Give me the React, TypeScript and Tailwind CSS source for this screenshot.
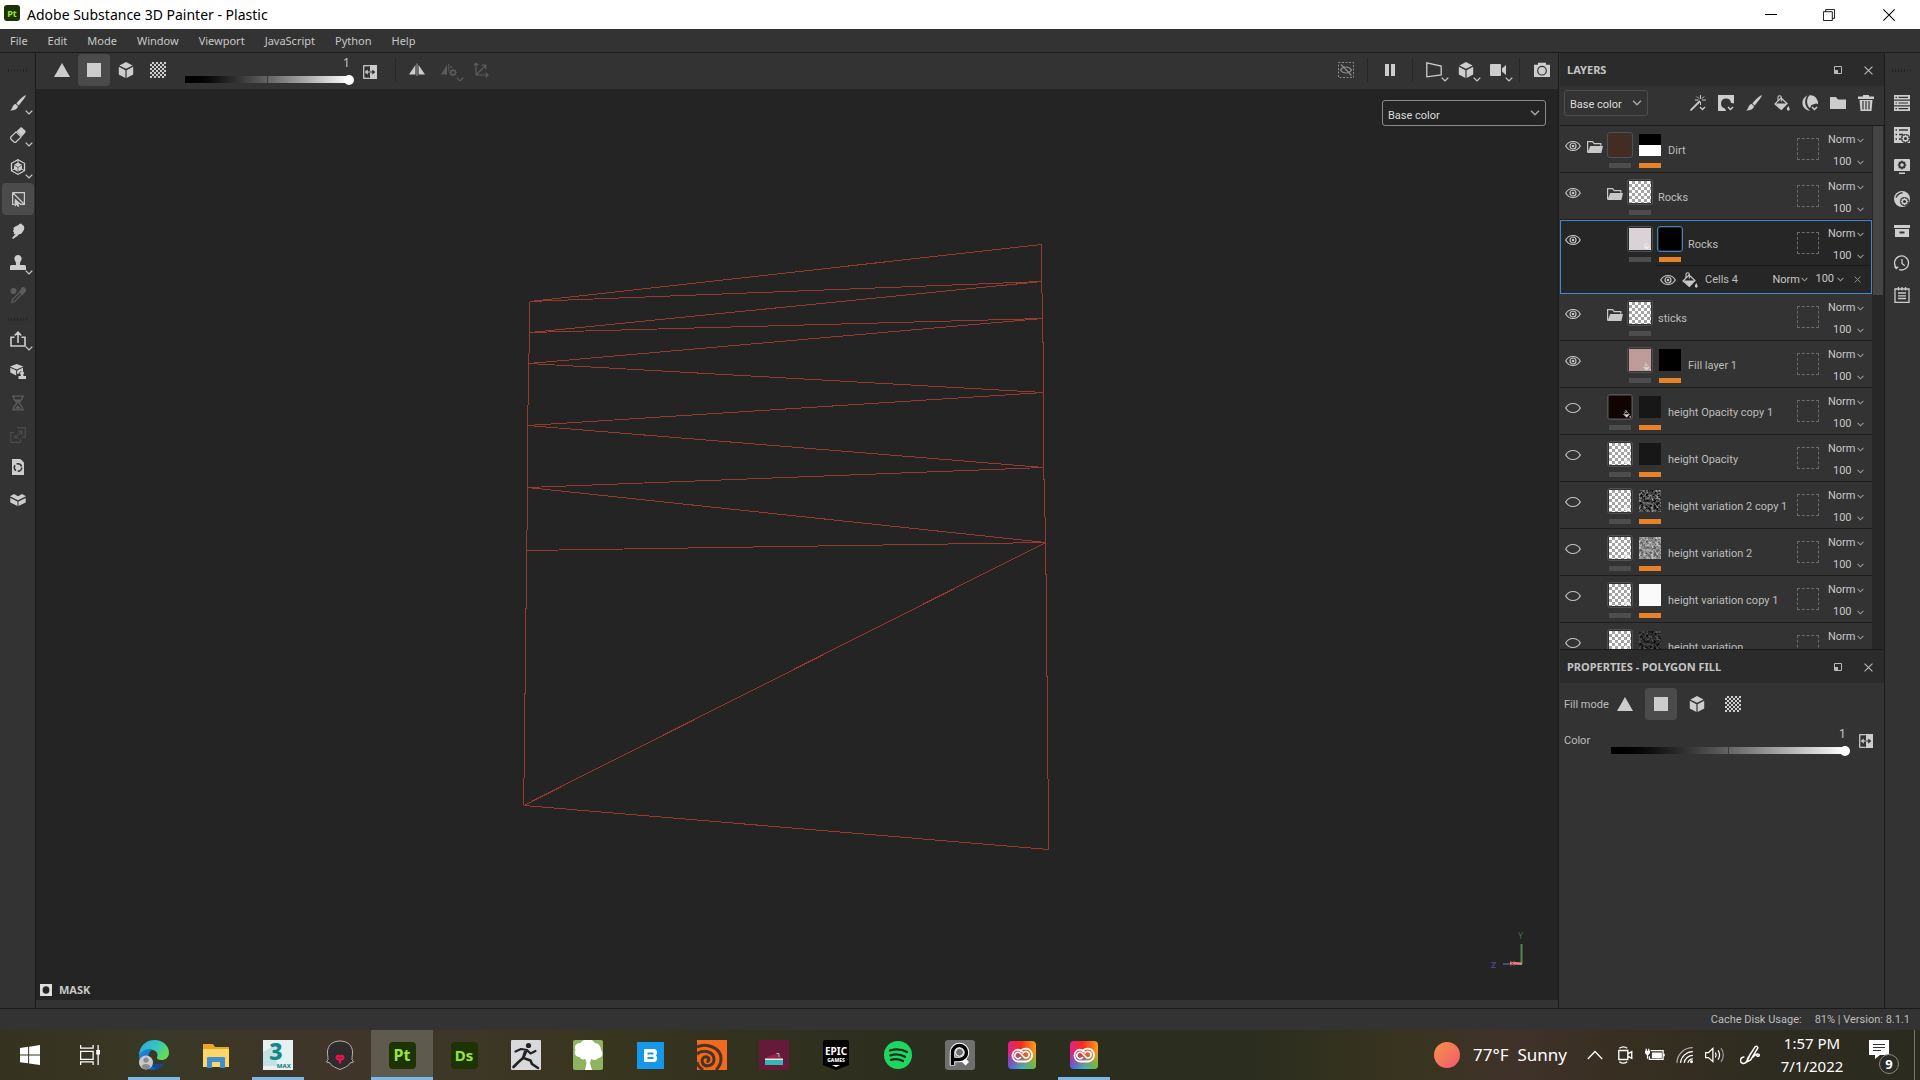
import React from "react";

type Kids = { children?: React.ReactNode };

/* ---------- small drawing helpers ---------- */

function Ico({ children, className = "size-4" }: Kids & { className?: string }) {
  return (
    <svg viewBox="0 0 16 16" className={`block shrink-0 ${className}`} fill="currentColor" aria-hidden="true">
      {children}
    </svg>
  );
}

function Line({ children, className = "size-4", w = 1.3 }: Kids & { className?: string; w?: number }) {
  return (
    <svg viewBox="0 0 16 16" className={`block shrink-0 ${className}`} fill="none" stroke="currentColor" strokeWidth={w} aria-hidden="true">
      {children}
    </svg>
  );
}

const Chevron = ({ className = "h-[5px] w-2" }: { className?: string }) => (
  <svg viewBox="0 0 8 5" className={`pointer-events-none block shrink-0 ${className}`} fill="none" stroke="currentColor" strokeWidth="1.2" aria-hidden="true">
    <path d="M.7.7 4 4 7.3.7" />
  </svg>
);

const Triangle = () => <Ico><path d="M8 1 16 15H0z" /></Ico>;
const Square = () => <Ico><path d="M1 1h14v14H1z" /></Ico>;
const Cube = () => (
  <Ico>
    <path d="M8 0 14.6 3.4 8 6.8 1.4 3.4zM.8 4.8 7.4 8.2V16L.8 12.4zM15.2 4.8 8.6 8.2V16l6.6-3.6z" />
  </Ico>
);
const Checker = () => (
  <span className="block size-4 bg-[repeating-conic-gradient(#cfcfcf_0_25%,#3a3a3a_0_50%)] bg-[length:4px_4px]" />
);
const Swap = () => (
  <Ico className="size-[14px]">
    <path d="M7 1H1v14h6M.5.5h15v15H.5z" fill="none" stroke="currentColor" />
    <path d="M8 0h8v16H8z" />
    <path d="M5.4 5 2 8l3.400 3V8.700H8V7.300H5.400z" />
    <path d="M10.600 5 14 8l-3.400 3V8.700H8V7.300h2.600z" fill="#2b2b2b" />
  </Ico>
);
const BrushIcon = () => (
  <Ico>
    <path d="M15.800.4C16 1.600 11 8 8.600 10.400L6.400 8.400C8.600 5.600 14.600-.2 15.800.4zM5.700 9.100l2.200 2c.2 2.600-3.400 4.700-7.700 4.300 2.400-1.100 2-5.800 5.500-6.300z" />
  </Ico>
);
const Bucket = ({ className = "size-4" }: { className?: string }) => (
  <Ico className={className}>
    <path d="M7 3 13 8.500 7.300 14.500 1 9z" fill="none" stroke="currentColor" strokeWidth="1.200" />
    <path d="M1.500 8.500h11.300L7.300 14.500z" />
    <path d="M4 6V2.500C4 .2 7.300.2 7.300 2.500v4" fill="none" stroke="currentColor" strokeWidth="1.100" />
    <path d="M14.300 11c.9 1.700 1.400 2.500 1.400 3.300a1.400 1.400 0 0 1-2.800 0c0-.8.5-1.600 1.400-3.300z" />
  </Ico>
);
const Camcorder = () => <Ico><path d="M1 2h9a1 1 0 0 1 1 1v10a1 1 0 0 1-1 1H1a1 1 0 0 1-1-1V3a1 1 0 0 1 1-1zM12 6.500l4-3.500v10l-4-3.500z" /></Ico>;
const FolderIcon = () => <Ico><path d="M0 2h6l2 2.500h8V14H0z" /></Ico>;
const FolderOpen = () => (
  <Ico>
    <path d="M.6 13.500V2.600h5l1.600 2h6.600v2.200" fill="none" stroke="currentColor" strokeWidth="1.200" />
    <path d="M3.200 7H16l-1.600 7H.5z" />
  </Ico>
);
const EyeOpen = () => (
  <Ico>
    <path d="M.7 8C4 2 12 2 15.300 8 12 14 4 14 .7 8z" fill="none" stroke="currentColor" strokeWidth="1.200" />
    <circle cx="8" cy="8" r="3" fill="none" stroke="currentColor" strokeWidth="1.200" />
    <circle cx="8" cy="8" r="1.300" />
  </Ico>
);
const EyeEmpty = () => <Line w={1.2}><path d="M.7 8C4 2 12 2 15.300 8 12 14 4 14 .7 8z" /></Line>;
const Gear = ({ x, y }: { x: number; y: number }) => (
  <g transform={`translate(${x} ${y})`}>
    <circle r="4.600" fill="#333" />
    <circle r="2.300" fill="none" stroke="currentColor" strokeWidth="1.400" />
    <path d="M0-3.800v1.200M0 2.600v1.200M-3.800 0h1.200M2.600 0h1.200M-2.700-2.700l.9.900M1.800 1.800l.9.900M2.700-2.700l-.9.900M-1.800 1.800l-.9.900" stroke="currentColor" strokeWidth="1.200" />
  </g>
);

const Grip = ({ className = "" }: { className?: string }) => (
  <span className={`block h-[3px] w-5 bg-[repeating-linear-gradient(90deg,#242424_0_1px,#333_1px_3px)] ${className}`} />
);

const Sep = () => <span className="h-6 w-px shrink-0 bg-[#272727]" />;

/* ---------- shared controls ---------- */

function ToolButton({ label, children, active, more, dim }: Kids & { label: string; active?: boolean; more?: boolean; dim?: boolean }) {
  return (
    <button
      type="button"
      aria-label={label}
      className={`relative flex size-8 shrink-0 items-center justify-center rounded ${active ? "bg-[#4b4b4b]" : ""} ${dim ? "text-[#5c5c5c]" : "text-[#cdcdcd]"}`}
    >
      {children}
      {more && <Chevron className="absolute right-px bottom-1 h-[5px] w-2" />}
    </button>
  );
}

function GreySlider({ label, className }: { label: string; className: string }) {
  return (
    <div className={`relative h-8 ${className}`}>
      <output className="absolute right-0 top-px w-[6px] text-[12px] leading-4 text-[#c4c4c4]">1</output>
      <div className="absolute inset-x-0 top-[22px] h-[7px] bg-linear-to-r from-black to-white">
        <span className="mx-auto block h-[7px] w-px bg-[#3a3a3a]" />
      </div>
      <input
        type="range"
        min={0}
        max={1}
        step={0.01}
        defaultValue={1}
        aria-label={label}
        className="absolute -right-[5px] -left-[5px] top-5 h-[11px] appearance-none bg-transparent [&::-webkit-slider-thumb]:size-[10px] [&::-webkit-slider-thumb]:appearance-none [&::-webkit-slider-thumb]:rounded-full [&::-webkit-slider-thumb]:bg-white"
      />
    </div>
  );
}

function FillModes({ spaced }: { spaced?: boolean }) {
  return (
    <div className={`flex ${spaced ? "gap-1" : ""}`}>
      <ToolButton label="Triangle fill"><Triangle /></ToolButton>
      <ToolButton label="Polygon fill" active><Square /></ToolButton>
      <ToolButton label="Mesh fill"><Cube /></ToolButton>
      <ToolButton label="UV chunk fill"><Checker /></ToolButton>
    </div>
  );
}

function ChannelSelect({ label, className }: { label: string; className: string }) {
  return (
    <div className={`relative h-[26px] rounded-[3px] border ${className}`}>
      <select aria-label={label} className="h-full w-full appearance-none bg-transparent px-[5px] font-[Roboto,sans-serif] text-[11px] text-[#dcdcdc]">
        <option>Base color</option>
      </select>
      <Chevron className="absolute right-[5px] top-[9px] h-[6px] w-[10px] text-[#a8a8a8]" />
    </div>
  );
}

/* ---------- title and menus ---------- */

function TitleBar() {
  return (
    <header className="flex h-[29px] shrink-0 items-center bg-white text-black">
      <span className="mb-[3px] ml-1 flex size-4 items-center justify-center rounded-[3px] bg-[#1d3306] text-[9px] leading-none font-bold text-[#9be92f]">Pt</span>
      <h1 className="ml-[7px] text-[14px] leading-5">Adobe Substance 3D Painter - Plastic</h1>
      <div className="ml-auto flex h-7">
        <button type="button" aria-label="Minimize" className="flex w-[58px] items-center justify-center"><span className="h-px w-3 bg-black" /></button>
        <button type="button" aria-label="Restore" className="flex w-[58px] items-center justify-center">
          <Line w={1.2} className="size-3"><path d="M.6 3.600h11.800v11.800H.6zM3.600 3.600V.6h11.800v11.800h-3" /></Line>
        </button>
        <button type="button" aria-label="Close" className="flex w-[62px] items-center justify-center">
          <Line w={1.4} className="size-3"><path d="m.5.5 15 15M15.500.5l-15 15" /></Line>
        </button>
      </div>
    </header>
  );
}

const MENUS = ["File", "Edit", "Mode", "Window", "Viewport", "JavaScript", "Python", "Help"];

function MenuBar() {
  return (
    <nav className="flex h-6 shrink-0 items-center gap-5 border-b border-[#1b1b1b] bg-[#333] pt-[2px] pl-[10px] text-[11px] text-[#c8c8c8]">
      {MENUS.map((m) => (
        <button key={m} type="button">{m}</button>
      ))}
    </nav>
  );
}

/* ---------- left tools ---------- */

function LeftTools() {
  return (
    <aside className="flex w-9 shrink-0 flex-col border-r border-[#1b1b1b] bg-[#333] pl-[2px]">
      <Grip className="mt-4 mb-[15px] ml-[6px]" />
      <ToolButton label="Paint" more><BrushIcon /></ToolButton>
      <ToolButton label="Eraser" more>
        <Ico>
          <path d="M6.600 4.200 10 .9c.8-.8 1.600-.8 2.400 0l2.700 2.700c.8.800.8 1.600 0 2.400L11.800 9.400z" />
          <path d="M6 4.800.9 10c-.6.6-.6 1.400 0 2l3.100 3c.6.6 1.400.6 2 0l5.200-5.200z" fill="none" stroke="currentColor" strokeWidth="1.200" />
        </Ico>
      </ToolButton>
      <ToolButton label="Projection" more>
        <Ico>
          <path d="M8 .7 14.500 4.300v7.400L8 15.300 1.500 11.700V4.300z" fill="none" stroke="currentColor" strokeWidth="1.300" />
          <path d="M8 3.500 12 5.700 8 8 4 5.700zM4 6.300 7.700 8.500v4.300L4 10.500zM12 6.300 8.300 8.500v4.300l3.700-2.300z" />
          <path d="M8 .7v3M1.500 11.700 4 10.200M14.500 11.700 12 10.200" stroke="currentColor" />
        </Ico>
      </ToolButton>
      <ToolButton label="Polygon fill" active>
        <Ico>
          <path d="M2.600 1.600h11.800v11.800H10M2.600 1.600v11.800h2M3 2l11 11" fill="none" stroke="currentColor" strokeWidth="1.200" />
          <path d="M4.700 7.500v8.300l2.100-1.900 1.100 2.100 1.500-.7-1-2.100 2.700-.2z" />
        </Ico>
      </ToolButton>
      <ToolButton label="Smudge">
        <Ico><path d="M10.800.4c.9 0 1 1 1.800 1.500.9.600 1.700 1 1.600 2.200-.1 1 .2 2.100-.5 3.200l-2 3c-.6.9-1.600.7-2.600 1L7.400 13 3 16l-1-1 4-4.400c-.8.5-1.300 1-2 .5-.7-.5-.3-1.100.2-1.700l-.8-.6c-.7-.8-.1-1.500.4-2l-.3-1.600c0-1.100 1-1.200 1.700-1.800L8 2.200C9 1.400 9.800.4 10.800.4z" /></Ico>
      </ToolButton>
      <ToolButton label="Clone" more>
        <Ico><path d="M8 0a3.800 3.800 0 0 1 2.800 6.300c-.8 1-.9 2.200-.9 3.700h4.600a1.500 1.500 0 0 1 1.500 1.500V15H0v-3.500A1.500 1.500 0 0 1 1.500 10h4.600c0-1.500-.1-2.700-.9-3.700A3.800 3.800 0 0 1 8 0z" /></Ico>
      </ToolButton>
      <ToolButton label="Material picker" dim>
        <Ico>
          <circle cx="3.500" cy="4" r="3" />
          <path d="M10 3.500 8.600 5l3.500 3.500 1.500-1.500 1.700-2a2.600 2.600 0 0 0-4-4z" />
          <path d="M9 6 2.600 12.300 1.600 15.400l3-.9L11 8" fill="none" stroke="currentColor" strokeWidth="1.200" />
        </Ico>
      </ToolButton>
      <Grip className="mt-[7px] mb-[2px] ml-[6px]" />
      <ToolButton label="Export" more>
        <Line w={1.6}><path d="M4.500 6.300H1V15h14V6.300h-3.500M8 12V2M4.700 4.500 8 1.200l3.300 3.300" /></Line>
      </ToolButton>
      <ToolButton label="Resources">
        <Ico>
          <path d="M6.700 1 13.400 3.400 6.700 6.500 0 3.400zM.3 4.800 6.200 7.600v4.900L.3 9.600zM13 4.800 7.200 7.600V11l2-.6c.2-2.200 2.400-2.800 3.800-1.600z" />
          <path d="M12 8.200a2 2 0 0 1 1.300 3.500v1.400H16V16H8.500v-2.900h2.300v-1.400A2 2 0 0 1 12 8.200z" />
        </Ico>
      </ToolButton>
      <ToolButton label="Bake" dim>
        <Ico>
          <path d="M2 1.200h12M2 14.800h12M3.700 1.500v2.200L7 8l-3.300 4.300v2.200M12.300 1.500v2.200L9 8l3.300 4.300v2.200" fill="none" stroke="currentColor" strokeWidth="1.300" />
          <path d="M5 4.500h6L8 8zM8 10l3 3.800H5z" />
        </Ico>
      </ToolButton>
      <ToolButton label="Resize" dim>
        <span className="text-[#4c4c4c]">
          <Line w={1.2}><path d="M4 5.500H.8v9.800h9.700V12M7 .8h8.300v9.500H12M5.200 10.800l6.500-6.500M8 4.200h3.800V8M5 7.500V11h3.500" /></Line>
        </span>
      </ToolButton>
      <ToolButton label="Update">
        <Ico>
          <path d="M2 0h8.500L14 3.500V16H2z" />
          <circle cx="8" cy="8.500" r="3.700" fill="none" stroke="#333" strokeWidth="1.600" strokeDasharray="6 1.750" />
        </Ico>
      </ToolButton>
      <ToolButton label="Assets">
        <Ico><path d="M0 5.300 4 3l4 2.200L12 3l4 2.300-8 4zM.3 7 7.500 10.500V15L.3 11.500zM15.700 7 8.500 10.500V15l7.200-3.500z" /></Ico>
      </ToolButton>
    </aside>
  );
}

/* ---------- viewport ---------- */

function ViewportTools() {
  return (
    <div className="flex h-9 shrink-0 items-center bg-[#333] pb-[2px] pl-[10px]">
      <FillModes />
      <GreySlider label="Fill value" className="ml-[11px] w-[164px]" />
      <button type="button" aria-label="Invert colour" className="mt-1 ml-[14px] text-[#cdcdcd]"><Swap /></button>
      <span className="w-[18px]" />
      <Sep />
      <span className="w-[5px]" />
      <ToolButton label="Symmetry">
        <Ico><path d="M6.400 3v9.500H0zM9.600 3v9.500H16z" /><path d="M7.300 1.500h1.400v12.500H7.300z" opacity=".5" /></Ico>
      </ToolButton>
      <ToolButton label="Symmetry settings" dim more>
        <Ico><path d="M6 3v9.500H0zM7.300 2h1v8h-1zM9.500 3l2 3h-2z" /><Gear x={12} y={10.500} /></Ico>
      </ToolButton>
      <ToolButton label="Transform" dim>
        <Line w={1.2}><path d="M3 1v12h12M.8 3.300 3 1l2.200 2.300M12.700 10.800 15 13l-2.300 2.200M3 13 12.500 3.500M8.800 3.200h4v4" /></Line>
      </ToolButton>
      <div className="ml-auto flex items-center">
        <ToolButton label="Hide">
          <span className="text-[#8c8c8c]">
            <Ico>
              <rect x=".5" y=".5" width="15" height="15" fill="none" stroke="currentColor" strokeDasharray="2 1.500" />
              <path d="M2.500 8C5 4 11 4 13.500 8 11 12 5 12 2.500 8zM3 2.500l10.500 11" fill="none" stroke="currentColor" strokeWidth="1.200" />
            </Ico>
          </span>
        </ToolButton>
        <span className="w-[5px]" />
        <Sep />
        <span className="w-[6px]" />
        <ToolButton label="Pause"><Ico><path d="M3 2h4v12H3zM9 2h4v12H9z" /></Ico></ToolButton>
        <span className="w-[6px]" />
        <Sep />
        <span className="w-[5px]" />
        <ToolButton label="Perspective" more><Line><path d="M.8.800 15.200 4v9L.8 14.800z" /></Line></ToolButton>
        <ToolButton label="Geometry" more><Cube /></ToolButton>
        <ToolButton label="Camera" more><Camcorder /></ToolButton>
        <span className="w-[5px]" />
        <Sep />
        <span className="w-[6px]" />
        <ToolButton label="Render">
          <Ico>
            <path d="M4 .8h8v2h4V15H0V2.800h4z" />
            <circle cx="8" cy="8.700" r="4.300" fill="none" stroke="#333" strokeWidth="1.200" />
          </Ico>
        </ToolButton>
      </div>
    </div>
  );
}

const LEFT: [number, number][] = [[529, 301], [529, 332], [528, 363], [527, 425], [527, 487], [526, 550], [523, 805]];
const RIGHT: [number, number][] = [[1041, 244], [1041, 281], [1042, 318], [1043, 392], [1043, 467], [1045, 542], [1048, 849]];
const EDGES: [[number, number], [number, number]][] = [
  [LEFT[0], RIGHT[0]], [LEFT[0], RIGHT[1]], [LEFT[1], RIGHT[1]], [LEFT[1], RIGHT[2]],
  [LEFT[2], RIGHT[2]], [LEFT[2], RIGHT[3]], [LEFT[3], RIGHT[3]], [LEFT[3], RIGHT[4]],
  [LEFT[4], RIGHT[4]], [LEFT[4], RIGHT[5]], [LEFT[5], RIGHT[5]], [LEFT[6], RIGHT[5]], [LEFT[6], RIGHT[6]],
];
const wire =
  EDGES.map(([a, b]) => `M${a[0]} ${a[1]}L${b[0]} ${b[1]}`).join("") +
  "M" + LEFT.map((p) => p.join(" ")).join("L") +
  "M" + RIGHT.map((p) => p.join(" ")).join("L");

function Viewport() {
  return (
    <main className="flex min-w-0 flex-1 flex-col bg-[#333]">
      <ViewportTools />
      <section className="relative mb-2 min-h-0 flex-1 bg-[#242424]" aria-label="3D view">
        <svg viewBox="36 89 1521 911" className="block h-full w-full" fill="none" stroke="#993a2e" strokeWidth="1" shapeRendering="crispEdges">
          <path d={wire} transform="translate(.2 .5)" />
        </svg>
        <div className="absolute right-3 top-[11px] w-[164px]">
          <ChannelSelect label="Viewport channel" className="w-full border-[#8a8a8a] bg-[#242424]" />
        </div>
        <svg viewBox="0 0 40 44" className="absolute right-[28px] bottom-[28px] h-11 w-10">
          <text x="28" y="11" fontSize="9" fill="#3f6b41">Y</text>
          <path d="M31.500 16v20" stroke="#4f8a4c" strokeWidth="2" />
          <path d="M13 36h10" stroke="#5a5a9a" strokeWidth="1.500" />
          <path d="M20 35l12 .8" stroke="#e08a85" strokeWidth="2.500" />
          <path d="M20.500 33l4 5M24.500 33l-4 5" stroke="#b04a48" strokeWidth="1" />
          <text x="1" y="40" fontSize="9" fontWeight="700" fill="#4a4780">Z</text>
        </svg>
        <div className="absolute bottom-[2px] left-1 flex items-center gap-[7px] text-[11px] leading-4 font-bold text-[#c8c8c8]">
          <Ico className="size-3"><path d="M0 0h16v16H0zM8 3a4.500 5 0 1 0 0 10A4.500 5 0 1 0 8 3z" fillRule="evenodd" fill="#dedede" /></Ico>
          MASK
        </div>
      </section>
    </main>
  );
}

/* ---------- layers ---------- */

type Thumb = "brown" | "half" | "checker" | "checkerfill" | "light" | "black" | "pink" | "darkred" | "dark" | "noise" | "noiselight" | "noisedark" | "white";

type Layer = {
  name: string;
  visible?: boolean;
  folder?: boolean;
  nested?: boolean;
  thumb: Thumb;
  mask?: Thumb;
  selected?: boolean;
};

const LAYERS: Layer[] = [
  { name: "Dirt", visible: true, folder: true, thumb: "brown", mask: "half" },
  { name: "Rocks", visible: true, folder: true, nested: true, thumb: "checker" },
  { name: "Rocks", visible: true, nested: true, thumb: "light", mask: "black", selected: true },
  { name: "sticks", visible: true, folder: true, nested: true, thumb: "checker" },
  { name: "Fill layer 1", visible: true, nested: true, thumb: "pink", mask: "black" },
  { name: "height Opacity copy 1", thumb: "darkred", mask: "dark" },
  { name: "height Opacity", thumb: "checkerfill", mask: "dark" },
  { name: "height variation 2 copy 1", thumb: "checkerfill", mask: "noise" },
  { name: "height variation 2", thumb: "checkerfill", mask: "noiselight" },
  { name: "height variation copy 1", thumb: "checkerfill", mask: "white" },
  { name: "height variation", thumb: "checkerfill", mask: "noisedark" },
];

const FILLS: Record<Thumb, string> = {
  brown: "bg-[#432d23]",
  half: "bg-linear-to-b from-black from-50% to-white to-50%",
  checker: "bg-[repeating-conic-gradient(#a3a3a3_0_25%,#fff_0_50%)] bg-[length:6px_6px]",
  checkerfill: "bg-[repeating-conic-gradient(#a3a3a3_0_25%,#fff_0_50%)] bg-[length:6px_6px]",
  light: "bg-[#d9d2d6]",
  black: "bg-black",
  pink: "bg-[#be9c9a]",
  darkred: "bg-[#120303]",
  dark: "bg-[#171717]",
  noise: "bg-[#333]",
  noiselight: "bg-[#888]",
  noisedark: "bg-[#222]",
  white: "bg-[#fafafa]",
};

const NOISE: Partial<Record<Thumb, string>> = {
  noise: "1.3 0 0 0 -.37 1.3 0 0 0 -.37 1.3 0 0 0 -.37 0 0 0 0 1",
  noiselight: "1 0 0 0 .05 1 0 0 0 .05 1 0 0 0 .05 0 0 0 0 1",
  noisedark: ".7 0 0 0 -.17 .7 0 0 0 -.17 .7 0 0 0 -.17 0 0 0 0 1",
};

function Tile({ kind, kindRole }: { kind: Thumb; kindRole: "content" | "mask" | "activemask" }) {
  const frame =
    kindRole === "activemask" ? "border border-[#3f82c4]" : kindRole === "content" ? "border border-[#505050]" : "border border-transparent";
  const bucketTone = kind === "darkred" || kind === "pink" ? "text-[#d8d8d8]" : "text-[#ececec]";
  const filled = kind === "pink" || kind === "darkred" || kind === "light" || kind === "checkerfill";
  return (
    <div className="w-[26px] shrink-0">
      <div className={`mt-[6px] size-[26px] rounded-[3px] p-px ${frame}`}>
        <div className={`relative size-[22px] ${FILLS[kind]}`}>
          {NOISE[kind] && (
            <svg className="block size-[22px]" aria-hidden="true">
              <filter id={`f-${kind}`} x="0" y="0" width="100%" height="100%" colorInterpolationFilters="sRGB">
                <feTurbulence type="fractalNoise" baseFrequency=".4" numOctaves={3} seed={7} />
                <feColorMatrix values={NOISE[kind]} />
              </filter>
              <rect width="22" height="22" filter={`url(#f-${kind})`} />
            </svg>
          )}
          {filled && (
            <span className={`absolute right-0 bottom-0 ${bucketTone}`}><Bucket className="size-2" /></span>
          )}
        </div>
      </div>
      <div className={`mx-auto mt-[5px] h-[5px] w-[22px] ${kindRole === "content" ? "bg-[#4d4d4d]" : "bg-[#e88227]"}`} />
    </div>
  );
}

function Blend({ label }: { label: string }) {
  return (
    <span className="flex items-center text-[#c8c8c8]">
      <select aria-label={label} className="w-[29px] appearance-none bg-transparent text-[11px] leading-4">
        <option>Norm</option>
      </select>
      <Chevron className="h-[5px] w-[7px] text-[#9a9a9a]" />
    </span>
  );
}

function LayerRow({ layer }: { layer: Layer }) {
  const main = (
    <div className={`flex ${layer.selected ? "h-[45px]" : "h-[46px]"}`}>
      <button type="button" aria-label="Toggle visibility" className="mr-px flex h-10 w-[26px] shrink-0 items-center justify-center text-[#c4c4c4]">
        {layer.visible ? <EyeOpen /> : <EyeEmpty />}
      </button>
      {layer.nested && <span className="w-5 shrink-0" />}
      <span className="flex h-[42px] w-5 shrink-0 items-center text-[#c8c8c8]">{layer.folder && <FolderOpen />}</span>
      <div className="flex gap-1">
        <Tile kind={layer.thumb} kindRole="content" />
        {layer.mask && <Tile kind={layer.mask} kindRole={layer.selected ? "activemask" : "mask"} />}
      </div>
      <span className="ml-[5px] flex h-[50px] min-w-0 flex-1 items-center text-[11px] whitespace-nowrap text-[#bdbdbd]">{layer.name}</span>
      <span className="mt-3 size-[22px] shrink-0 border border-dashed border-[#6b6b6b]" />
      <div className="mr-2 ml-[9px] w-9 shrink-0 pt-px">
        <div className="flex h-[26px] items-center"><Blend label={`${layer.name} blend mode`} /></div>
        <button type="button" aria-label="Opacity 100" className="flex h-[18px] w-full items-center justify-between pl-[5px] text-[11px] text-[#c8c8c8]">
          100
          <Chevron className="h-[5px] w-[7px] text-[#9a9a9a]" />
        </button>
      </div>
    </div>
  );
  if (!layer.selected) return <li className="h-[47px] shrink-0 border-b border-[#1e1e1e] bg-[#333]">{main}</li>;
  return (
    <li className="h-[74px] shrink-0 bg-[#262626] inset-ring inset-ring-[#4489cf]">
      {main}
      <div className="mr-[2px] ml-24 flex h-7 items-center border-t border-[#1b1b1b] text-[11px] text-[#bdbdbd]">
        <button type="button" aria-label="Toggle effect" className="ml-1 text-[#c4c4c4]"><EyeOpen /></button>
        <span className="ml-[6px] text-[#c8c8c8]"><Bucket /></span>
        <span className="ml-[7px] flex-1 pt-px">Cells 4</span>
        <Blend label="Effect blend mode" />
        <button type="button" aria-label="Effect opacity 100" className="ml-[7px] flex items-center gap-[3px] text-[#c8c8c8]">
          100
          <Chevron className="h-[5px] w-[7px] text-[#9a9a9a]" />
        </button>
        <button type="button" aria-label="Remove effect" className="mr-[9px] ml-[10px] text-[#9a9a9a]">
          <Line w={2} className="size-[7px]"><path d="m1 1 14 14M15 1 1 15" /></Line>
        </button>
      </div>
    </li>
  );
}

function PanelHeader({ title }: { title: string }) {
  return (
    <div className="flex h-[33px] shrink-0 items-center bg-[#2b2b2b] pt-px pr-[11px] pl-[7px] font-['Noto_Sans',sans-serif]">
      <h2 className="text-[11px] font-bold text-[#c4c4c4]">{title}</h2>
      <button type="button" aria-label="Undock" className="mr-[22px] ml-auto text-[#b8b8b8]">
        <Ico className="size-2"><path d="M1 1h14v14H1z" fill="none" stroke="currentColor" strokeWidth="2" /><path d="M1 8h7v7H1z" /></Ico>
      </button>
      <button type="button" aria-label="Close panel" className="text-[#b8b8b8]">
        <Line w={2} className="size-[9px]"><path d="m1 1 14 14M15 1 1 15" /></Line>
      </button>
    </div>
  );
}

const LAYER_TOOLS: [string, React.ReactNode][] = [
  ["Add effect", <Ico><path d="M.5 15.500 10 6" stroke="currentColor" strokeWidth="1.800" /><path d="M10.500 0v4M10.500 7v3M5 5h3.500M12 5h4M7 1.500l2 2M14 1.500l-2 2" stroke="currentColor" strokeWidth="1" /><path d="m10 12 2.500 2.500L15 12" fill="none" stroke="currentColor" strokeWidth="1.300" /></Ico>],
  ["Add mask", <Ico><path d="M0 0h16v8.500A5 5 0 0 0 13 8a5 5 0 1 0-6 5.500L8 16H0z" /><path d="m10 12 2.500 2.500L15 12" fill="none" stroke="currentColor" strokeWidth="1.500" /></Ico>],
  ["Add paint layer", <BrushIcon />],
  ["Add fill layer", <Bucket />],
  ["Add smart material", <Ico><path d="M5.500.5C-.5 2.500-1.500 11 4 14.500c1.500 1 3 1 4 1C2 12 2 4 5.500.5zM7.500.2C3.500 4.500 5 11 8 13l1.500-3L14 8.500l2 .5C16.500 4 12.500-.5 7.500.2z" /><path d="m10 12 2.500 2.500L15 12" fill="none" stroke="currentColor" strokeWidth="1.500" /></Ico>],
  ["Add folder", <FolderIcon />],
  ["Delete", <Ico><path d="M5 0h6v1.500h5V4H0V1.500h5zM1.500 5h13l-1 11h-11z" /><path d="M5 6v8.500M8 6v8.500M11 6v8.500" stroke="#333" strokeWidth="1.200" /></Ico>],
];

function LayersPanel() {
  return (
    <section className="flex min-h-0 flex-[597] flex-col">
      <PanelHeader title="LAYERS" />
      <div className="flex h-10 shrink-0 items-center border-b border-[#1b1b1b] bg-[#333] pr-[10px] pb-[6px] pl-1">
        <ChannelSelect label="Layer channel" className="w-[84px] border-[#4d4d4d] bg-[#333]" />
        <div className="ml-auto flex gap-3 text-[#cdcdcd]">
          {LAYER_TOOLS.map(([label, icon]) => (
            <button key={label} type="button" aria-label={label}>{icon}</button>
          ))}
        </div>
      </div>
      <div className="flex min-h-0 flex-1 overflow-hidden bg-[#272727]">
        <ul className="flex min-w-0 flex-1 flex-col overflow-hidden">
          {LAYERS.map((l, i) => <LayerRow key={i} layer={l} />)}
        </ul>
        <div className="w-3 shrink-0 px-px"><div className="h-[169px] bg-[#444]" /></div>
      </div>
    </section>
  );
}

function PropertiesPanel() {
  return (
    <section className="flex min-h-0 flex-[358] flex-col border-t border-[#1b1b1b] bg-[#333] text-[11px] text-[#bdbdbd]">
      <PanelHeader title="PROPERTIES - POLYGON FILL" />
      <div className="mt-[5px] flex items-center pl-1">
        <span className="w-[45px] pt-px whitespace-nowrap">Fill mode</span>
        <FillModes spaced />
      </div>
      <div className="mt-[5px] flex items-center pr-[11px] pl-1">
        <span className="w-[47px]">Color</span>
        <GreySlider label="Color" className="min-w-0 flex-1" />
        <button type="button" aria-label="Invert fill colour" className="ml-[14px] text-[#cdcdcd]"><Swap /></button>
      </div>
    </section>
  );
}

/* ---------- right rail ---------- */

function RightRail() {
  return (
    <aside className="flex w-[35px] shrink-0 flex-col items-center bg-[#333] pr-[2px]">
      <Grip className="mt-4 mb-[15px]" />
      <ToolButton label="Layers"><Ico><path d="M0 0h16v4.500H0zM0 5.700h16v4.500H0zM0 11.500h16V16H0z" /><path d="M4.500 2.300H14M4.500 8H14M4.500 13.700H14M1.500 2.300H3M1.500 8H3M1.500 13.700H3" stroke="#333" strokeWidth="1.200" /></Ico></ToolButton>
      <ToolButton label="Texture set settings"><Ico><path d="M0 0h16v16H0z" /><path d="M5 3h9M5 7.500h4M5 12h2M1.500 3H3M1.500 7.500H3M1.500 12H3" stroke="#333" strokeWidth="1.400" /><Gear x={11.500} y={11.500} /></Ico></ToolButton>
      <ToolButton label="Display settings"><Ico><path d="M1 0h14a1 1 0 0 1 1 1v11H0V1a1 1 0 0 1 1-1zM5 13.500h6V15H5z" /><circle cx="8" cy="6" r="2.800" fill="none" stroke="#333" strokeWidth="1.700" /><path d="M8 1.600v8.800M3.600 6h8.800M4.900 2.900l6.200 6.200M11.100 2.900 4.900 9.100" stroke="#333" strokeWidth="1.200" /><circle cx="8" cy="6" r="1.700" /></Ico></ToolButton>
      <ToolButton label="Shader settings"><Ico><circle cx="8" cy="8" r="8" /><path d="M2 6.500C3.500 3.500 5.500 2 8.500 1.800" fill="none" stroke="#333" strokeWidth="1.400" /><Gear x={10.500} y={10.500} /></Ico></ToolButton>
      <ToolButton label="Shelf"><Ico><path d="M0 2h16v3H0zM1 6h14v8H1z" /><path d="M5.500 8.500h5v2h-5z" fill="#333" /></Ico></ToolButton>
      <ToolButton label="History"><Line><path d="M2.200 12.500A7 7 0 1 1 5 14.500M8 4v4.500l2.800 2.300M.5 11.500l1.800 2 2-1.700" /></Line></ToolButton>
      <ToolButton label="Log"><Line><path d="M1 2h14v13.300H1zM4 6h8M4 8.800h8M4 11.500h8M4.500 0v3.500M8 0v3.500M11.500 0v3.500" /></Line></ToolButton>
    </aside>
  );
}

/* ---------- taskbar ---------- */

const sans = "font-['Noto_Sans',sans-serif]";

function CreativeCloud({ id }: { id: string }) {
  return (
    <svg viewBox="0 0 28 28" className="size-7">
      <defs>
        <linearGradient id={`${id}a`} x1="0" y1="0" x2="1" y2="0"><stop offset="0" stopColor="#e0218f" /><stop offset=".45" stopColor="#f52b20" /><stop offset="1" stopColor="#f8a01a" /></linearGradient>
        <linearGradient id={`${id}b`} x1="0" y1="0" x2="1" y2="0"><stop offset="0" stopColor="#4a5de8" /><stop offset=".5" stopColor="#36b9c8" /><stop offset="1" stopColor="#58c23a" /></linearGradient>
        <linearGradient id={`${id}m`} x1="0" y1="0" x2="0" y2="1"><stop offset=".35" stopColor="#fff" stopOpacity="0" /><stop offset="1" stopColor="#fff" /></linearGradient>
        <mask id={`${id}k`}><rect width="28" height="28" fill={`url(#${id}m)`} /></mask>
      </defs>
      <rect width="28" height="28" rx="4" fill={`url(#${id}a)`} />
      <rect width="28" height="28" rx="4" fill={`url(#${id}b)`} mask={`url(#${id}k)`} />
      <g fill="none" stroke="#fff" strokeLinecap="round">
        <path d="M10 20.500A6 6 0 0 1 9.500 8.600c2.500 0 3.500 1 4.500 2M18.500 20.500H10M12.500 10A6.500 6.500 0 1 1 18.500 20.500" strokeWidth="1.800" />
        <path d="M12.500 16.500a3.200 3.200 0 1 1-.3-4.300l4.500 4.500M15 12.200a3.200 3.200 0 1 1 1.700 4.500" strokeWidth="1.600" />
      </g>
    </svg>
  );
}

const APPS: { name: string; open?: boolean; active?: boolean; art: React.ReactNode }[] = [
  {
    name: "Edge", open: true,
    art: (
      <svg viewBox="0 0 30 30" className="size-[30px]">
        <defs>
          <linearGradient id="eg" x1="0" y1="0" x2="1" y2=".5"><stop offset="0" stopColor="#2aa5dc" /><stop offset=".6" stopColor="#35c6c0" /><stop offset="1" stopColor="#63dc55" /></linearGradient>
          <linearGradient id="eb" x1="0" y1="0" x2="1" y2="1"><stop offset="0" stopColor="#1d8fdb" /><stop offset="1" stopColor="#0c4f9e" /></linearGradient>
        </defs>
        <path d="M0 16C0 6 7 0 15.500 0 24 0 30 6 30 12.500c0 5-3.500 7.500-7.500 7.500-3.500 0-5-1.500-4.500-2.500 1.500-3 0-6.500-4-7.500C8 8.500 2.500 11 0 16z" fill="url(#eg)" />
        <path d="M0 16C2 10.500 8 8 13.500 9.500c-3 1.500-4.500 5-3.500 9 1.500 5 8 8 15 4.800C22 28 18 30 14 30 6 30 0 24 0 16z" fill="url(#eb)" />
        <path d="M10 17c0 6 7 9.500 15.500 5.700-1.500 2.800-4 5.300-7 6.500C13 28 9.500 22 10 17z" fill="#0d4a94" />
        <circle cx="7" cy="22.500" r="7" fill="#c9c9c9" /><circle cx="7" cy="20" r="2.600" fill="#8a8a8a" /><path d="M2.500 27c.5-4 8.500-4 9 0-2 3-7 3-9 0z" fill="#8a8a8a" />
      </svg>
    ),
  },
  {
    name: "File Explorer",
    art: (
      <svg viewBox="0 0 28 28" className="size-7">
        <path d="M1 3h10l2 3h14v20H1z" fill="#e7a824" /><path d="M1 8h26v18H1z" fill="#fcd768" /><path d="M5 27V17q0-1 1-1h16q1 0 1 1v10h-5v-6h-8v6z" fill="#3f8fd0" />
      </svg>
    ),
  },
  {
    name: "3ds Max", open: true,
    art: (
      <svg viewBox="0 0 30 30" className="size-[30px]">
        <rect width="30" height="30" fill="#e6f1f1" /><path d="M0 12 14 4v22H0z" fill="#c4e2e1" />
        <text x="13" y="20" textAnchor="middle" fontSize="23" fontWeight="800" fill="#12868b" className={sans}>3</text>
        <text x="28" y="28" textAnchor="end" fontSize="6" fontWeight="800" fill="#28868c" className={sans}>MAX</text>
      </svg>
    ),
  },
  {
    name: "Launcher",
    art: (
      <svg viewBox="0 0 30 30" className="size-[30px]">
        <path d="M15 1c8 0 12.500 5 12.500 11 0 3-.5 5-.5 7.500l1.500 2.500-3.500 1c-1 2.500-4 4-10 6.500-6-2.500-9-4-10-6.500L1.500 22 3 19.500C3 17 2.500 15 2.500 12 2.500 6 7 1 15 1z" fill="#2e2b2d" stroke="#b9b2ae" strokeWidth="1" />
        <path d="M15 23.500v-4c-3 .5-4.500-2.500-2.500-3.500 1.500-.5 2.500.5 2.500 2 0-1.500 1-2.500 2.500-2 2 1 .5 4-2.500 3.500" fill="none" stroke="#f0124d" strokeWidth="2.200" />
      </svg>
    ),
  },
  { name: "Substance Painter", active: true, art: <span className="flex size-[27px] items-center justify-center rounded bg-[#1d3303] text-[16px] leading-none font-bold text-[#9be43c]">Pt</span> },
  { name: "Substance Designer", art: <span className="flex size-[27px] items-center justify-center rounded bg-[#1d3303] text-[15px] leading-none font-bold text-[#9be43c]">Ds</span> },
  {
    name: "ZBrush",
    art: (
      <svg viewBox="0 0 30 30" className="size-[30px]">
        <rect width="30" height="30" rx="1" fill="#d9d9dc" /><circle cx="17.500" cy="5.500" r="2.600" fill="#222" />
        <path d="M4.500 11.500 10 9l6 1 3.500 3.500 5-2.500M15.500 11l-3 6.500" fill="none" stroke="#222" strokeWidth="2.200" strokeLinejoin="round" strokeLinecap="round" />
        <path d="M14 12l-2 6-5 4.500-4.500 4.500M12.500 18l7 2.500 1.500 3.500 6 4" fill="none" stroke="#222" strokeWidth="2.600" strokeLinejoin="round" strokeLinecap="round" />
      </svg>
    ),
  },
  {
    name: "SpeedTree",
    art: (
      <svg viewBox="0 0 30 30" className="size-[30px]">
        <rect width="30" height="30" rx="2" fill="#8fb35f" />
        <path d="M15 0c4-1 6 2 7 3 4 0 6 4 6 7 3 3 1 8-3 8-2 3-5 2-7 1l-1 4 2 7h-7l1.500-7-1-4c-3 1-5 0-6-2-4 0-6-4-4-7-2-4 1-7 5-7 1-2 4-4 7.500-3z" fill="#fff" />
      </svg>
    ),
  },
  {
    name: "Bridge",
    art: (
      <svg viewBox="0 0 27 27" className="size-[27px]">
        <rect width="27" height="27" fill="#1597ea" /><path d="M7 7h11l2 2v3l-1.200 1.500L20 15v3l-2 2H7z" fill="#fff" /><path d="M10.500 11.500h6M10.500 16h6" stroke="#1597ea" strokeWidth="1.800" />
      </svg>
    ),
  },
  {
    name: "Houdini",
    art: (
      <svg viewBox="0 0 30 30" className="size-[30px]">
        <rect width="30" height="30" fill="#f26a21" />
        <path d="M0 7C9 3 24 7 24 19c0 5-2 8-5 11M0 14c6-5 17-3 17 5.500C17 26 8 28 5.500 23 4 19 7 16 10 17c3 1 2 4.500-.5 4.500M0 22c1 4 3 6 6 8" fill="none" stroke="#4a3320" strokeWidth="3" />
      </svg>
    ),
  },
  {
    name: "Marmoset",
    art: (
      <svg viewBox="0 0 30 30" className="size-[30px]">
        <rect width="30" height="30" fill="#641a38" /><path d="M6 19q6-5 13-5l5 5z" fill="#9c2148" /><path d="M6 19h18v6H6z" fill="#35b7b0" /><path d="M6 18.500h18v1.500H6z" fill="#d8ecea" /><path d="M17.500 13.500H20V17" fill="none" stroke="#9cb" />
      </svg>
    ),
  },
  {
    name: "Epic Games",
    art: (
      <svg viewBox="0 0 26 30" className="h-[30px] w-[26px]">
        <path d="M2 0h22q2 0 2 2v23l-13 5L0 25V2q0-2 2-2z" fill="#000" />
        <text x="13" y="14.500" textAnchor="middle" fontSize="10" fontWeight="700" fill="#fff" className={sans}>EPIC</text>
        <text x="13" y="21.500" textAnchor="middle" fontSize="5" fontWeight="800" fill="#fff" className={sans}>GAMES</text>
        <path d="M9 25h8l-4 2z" fill="#fff" />
      </svg>
    ),
  },
  {
    name: "Spotify",
    art: (
      <svg viewBox="0 0 28 28" className="size-7">
        <circle cx="14" cy="14" r="14" fill="#1ed760" /><path d="M6 9.500c6-1.800 12-1.200 17 1.500M6.500 14.300c5-1.500 10-1 14.500 1.500M7 18.800c4.500-1.200 8.500-.7 12 1.300" fill="none" stroke="#1b2a1c" strokeWidth="2.300" strokeLinecap="round" />
      </svg>
    ),
  },
  {
    name: "PureRef",
    art: (
      <svg viewBox="0 0 30 30" className="size-[30px]">
        <rect width="30" height="30" rx="3" fill="#6f6f6f" />
        <path d="M7.500 25.500V12a7 7 0 1 1 7 7.500H9" fill="none" stroke="#fff" strokeWidth="5.500" />
        <path d="M7.500 25V12a7 7 0 1 1 7 7.500H9" fill="none" stroke="#000" strokeWidth="3.500" />
        <circle cx="14.500" cy="12.300" r="4" fill="#6f6f6f" stroke="#fff" strokeWidth="1" />
        <path d="m20.500 18.500 3.500 3.500-3.500 3.500-3.500-3.500z" fill="#fff" />
      </svg>
    ),
  },
  { name: "Creative Cloud", art: <CreativeCloud id="cca" /> },
  { name: "Creative Cloud Desktop", open: true, art: <CreativeCloud id="ccb" /> },
];

function Taskbar() {
  return (
    <footer className="flex h-[50px] shrink-0 items-stretch bg-[linear-gradient(90deg,#35331f_0%,#3a3826_9%,#40352a_18%,#3d3728_22%,#38351f_32%,#2b2d1e_48%,#2b2d1e_65%,#38341f_73%,#40322a_79%,#382f22_84%,#2e2c20_92%,#2c2b20_100%)] text-white">
      <button type="button" aria-label="Start" className="flex w-[60px] items-center justify-center">
        <Ico className="size-5"><path d="M0 2.300 6.500 1.400V7.600H0zM7.300 1.300 16 0v7.600H7.300zM0 8.400h6.500v6.200L0 13.700zM7.300 8.400H16V16l-8.700-1.300z" /></Ico>
      </button>
      <button type="button" aria-label="Task view" className="flex w-[63px] items-center justify-center pr-[3px]">
        <Line w={1} className="size-5"><path d="M.5 0v2.500h10V0M.5 5h10v6.500H.5zM.5 16v-2.500h10V16M14.500 0v16" /><path d="M13.500 4.500h2v2.500h-2z" fill="currentColor" /></Line>
      </button>
      {APPS.map((a) => (
        <button key={a.name} type="button" aria-label={a.name} className={`relative flex w-[62px] shrink items-center justify-center ${a.active ? "bg-[#5e5b4e]" : ""}`}>
          {a.art}
          {(a.open || a.active) && <span className={`absolute bottom-0 h-[3px] bg-[#7cb7ea] ${a.active ? "inset-x-0" : "inset-x-[5px]"}`} />}
        </button>
      ))}
      <div className="ml-auto flex items-center">
        <button type="button" className="flex items-center gap-[13px] text-[17px] whitespace-nowrap">
          <span className="size-[26px] rounded-full bg-linear-to-br from-[#f5913f] to-[#f4566f]" />
          <span className="whitespace-pre">77°F  Sunny</span>
        </button>
        <div className="ml-[13px] flex items-center">
          <button type="button" aria-label="Show hidden icons" className="flex w-[30px] justify-center">
            <Line w={1.3} className="size-4"><path d="M.8 12 8 4.500l7.200 7.500" /></Line>
          </button>
          <button type="button" aria-label="Meet now" className="flex w-[30px] justify-center"><Line w={1.200} className="size-[18px]"><path d="M2.500 4h8v8h-8zM10.500 7 14 5v6l-3.500-2M3 2Q6.500-.5 10 2M3 14q3.500 2.500 7 0" /></Line></button>
          <button type="button" aria-label="Battery" className="flex w-[30px] justify-center"><Ico className="size-5"><path d="M4.500 4.500h10v7h-11V9M15.300 7v2" fill="none" stroke="currentColor" /><path d="M5.500 6h8v4.500h-8zM0 4.500h4v2L2.700 8H1.300L0 6.500zM.5 3h1v1.500h-1zM2.500 3h1v1.500h-1zM1.500 8h1v3h-1z" /></Ico></button>
          <button type="button" aria-label="Wi-Fi" className="flex w-[30px] justify-center"><Line w={1.1} className="size-[18px]"><path d="M.8 15A14 14 0 0 1 15 1.500" opacity=".6" /><path d="M4 15A11 11 0 0 1 15 5M7.200 15A8 8 0 0 1 15 8.300M10.500 15a5 5 0 0 1 4.500-3.500" /><circle cx="13.800" cy="14" r="1.300" fill="currentColor" stroke="none" /></Line></button>
          <button type="button" aria-label="Volume" className="flex w-[30px] justify-center"><Line w={1} className="size-5"><path d="M.5 6h2.300L6.300 2.700v10.600L2.800 10H.5zM8.300 6q1.200 2 0 4M10.500 4.300q2.300 3.700 0 7.400" /><path d="M12.800 2.500q3.700 5.500 0 11" opacity=".5" /></Line></button>
          <button type="button" aria-label="Ink workspace" className="flex w-[42px] justify-center pr-[3px]"><Line w={1.2} className="size-5"><path d="M6 11 12 1.500q1.500-1.300 2.300.8L8.500 12 5.500 13.500zM3.500 9.500C-.5 9.500-.5 15 3 14.800 7 14.500 7 6 10 5.500M10 10c3-4 6-3 5.300-1.500-.6 1.300-2.800 0-2.300-1.500" /></Line></button>
        </div>
        <button type="button" className="w-20 text-center text-[15px] leading-[23px] whitespace-nowrap">
          <time>1:57 PM<br />7/1/2022</time>
        </button>
        <button type="button" aria-label="Notifications" className="relative mr-[13px] ml-[17px] h-8 w-8">
          <svg viewBox="0 0 32 32" className="size-8"><path d="M0 1h20v15h-9l-5 4v-4H0z" fill="#fff" /><path d="M4 5.500h12M4 8.500h12M4 11.500h8" stroke="#333" strokeWidth="1.200" /></svg>
          <span className="absolute right-[2px] bottom-[-3px] flex size-5 items-center justify-center rounded-full border border-[#8a8a84] bg-[#2b2b26] text-[13px] leading-none font-bold">9</span>
        </button>
        <span className="mr-[5px] h-full w-px bg-[#77766c]" />
      </div>
    </footer>
  );
}

export default function App() {
  return (
    <div className="flex h-screen flex-col overflow-hidden bg-[#333] font-['Noto_Sans','Open_Sans',sans-serif]">
      <TitleBar />
      <MenuBar />
      <div className="flex min-h-0 flex-1">
        <LeftTools />
        <Viewport />
        <div className="flex w-[327px] shrink-0 flex-col border-x border-[#1b1b1b] pl-px font-[Roboto,sans-serif]">
          <LayersPanel />
          <PropertiesPanel />
        </div>
        <RightRail />
      </div>
      <div className="flex h-[22px] shrink-0 items-center justify-end gap-[9px] border-t border-[#1b1b1b] pt-[2px] pr-[10px] font-[Roboto,sans-serif] text-[11px] text-[#bdbdbd]">
        <span>Cache Disk Usage:</span>
        <span className="pl-1">81% | Version: 8.1.1</span>
      </div>
      <Taskbar />
    </div>
  );
}
